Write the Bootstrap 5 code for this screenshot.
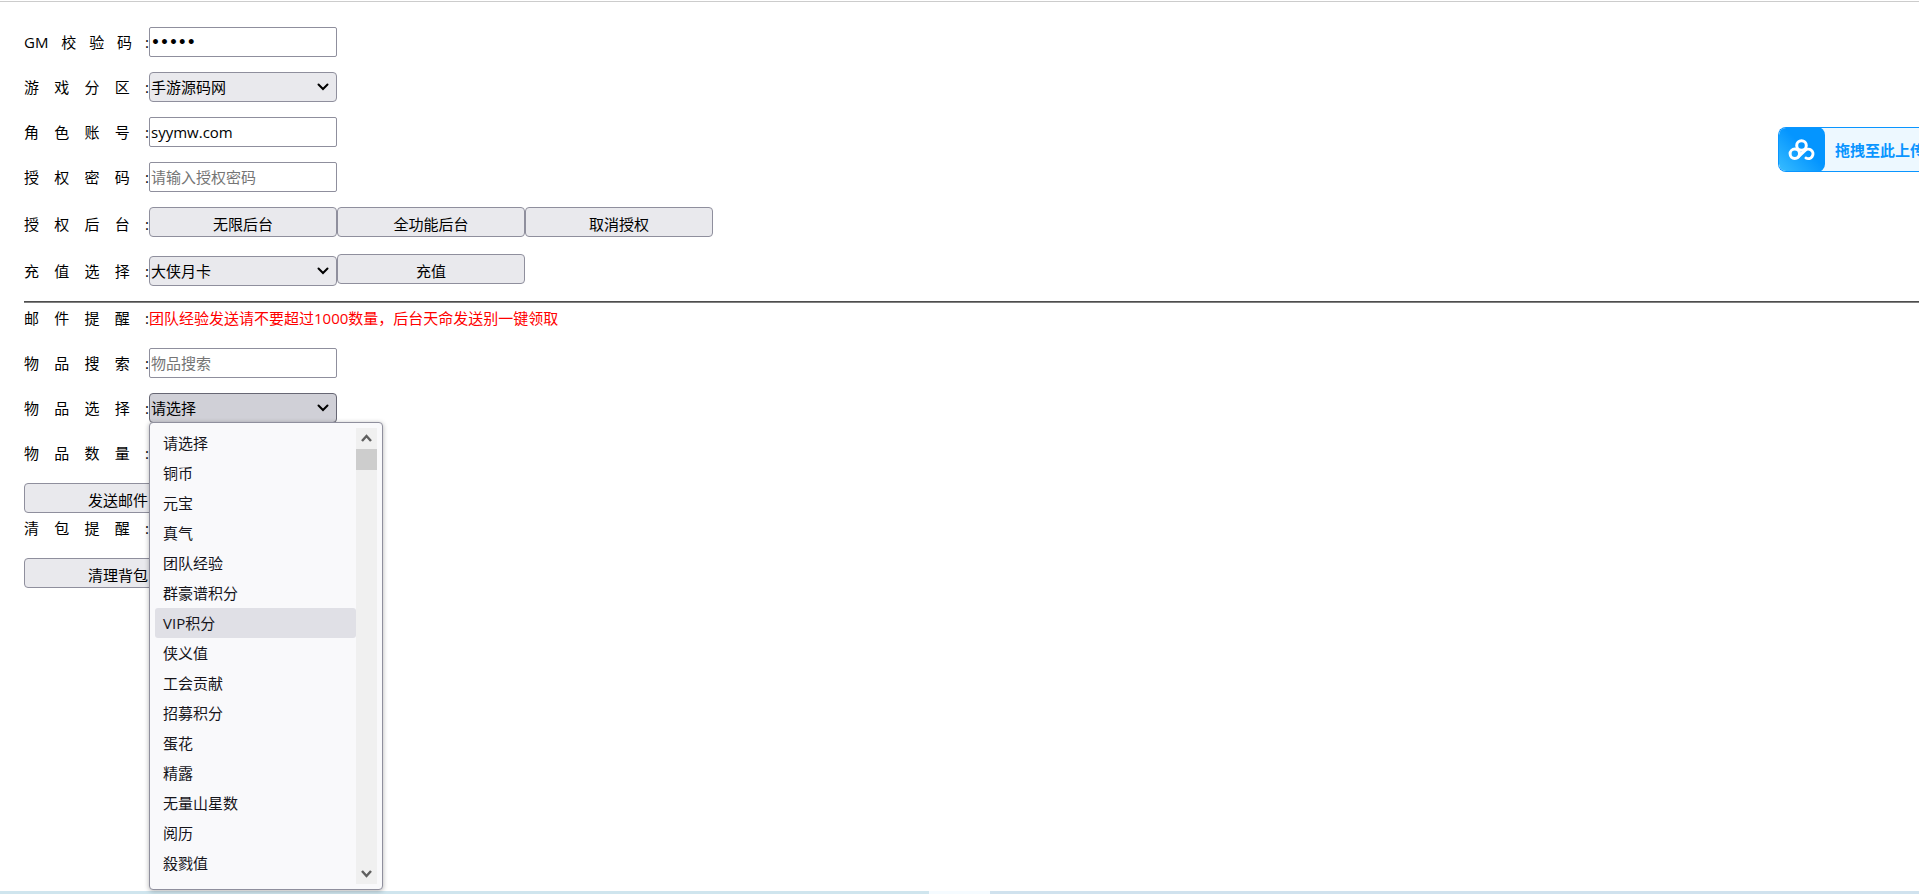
<!DOCTYPE html>
<html lang="zh-CN">
<head>
<meta charset="utf-8">
<meta name="viewport" content="width=device-width, initial-scale=1">
<title>GM 后台</title>
<link href="https://cdn.jsdelivr.net/npm/bootstrap@5.3.0/dist/css/bootstrap.min.css" rel="stylesheet">
<style>
  body { font: 15px/30px "Open Sans", "Noto Sans CJK SC", sans-serif; color: #000; background: #fff; }
  .topline { height: 1px; margin-top: 1px; background: #ccc; }
  .gm-form { padding: 25px 0 0 24px; }
  .gm-row { display: flex; align-items: flex-end; min-height: 30px; margin-bottom: 15px; }
  .gm-row.actions { min-height: 32px; }
  .gm-row.actions .gm-btn { align-self: flex-start; }
  .gm-label { width: 125px; height: 30px; flex: none; text-align: justify; text-align-last: justify; }
  .gm-field, .gm-btn { width: 188px; height: 30px; border: 1px solid #8f8f9d; color: #000; line-height: 28px; flex: none; }
  .gm-field { padding: 0 1px; border-radius: 2px; background: #fff; }
  .gm-field::placeholder { color: #757575; opacity: 1; }
  .gm-field[type="password"] { font-family: "DejaVu Sans", sans-serif; font-weight: 700; font-size: 14px; }
  .gm-btn { border-radius: 4px; background: #e9e9ed; padding: 4px 0 0; line-height: 24px; }
  .gm-select { appearance: none; border-radius: 4px; background: #e9e9ed url("data:image/svg+xml,%3Csvg xmlns='http://www.w3.org/2000/svg' width='12' height='8'%3E%3Cpath d='M1.5 1.5 6 6l4.500-4.500' fill='none' stroke='%23000' stroke-width='2' stroke-linecap='round'/%3E%3C/svg%3E") no-repeat right 7px center; }
  .gm-select.opened { background-color: #d0d0d7; border-color: #676774; }
  .rule { height: 2px; margin: 0; border: 0; border-top: 1px solid #4d4d4d; border-bottom: 1px solid #808080; opacity: 1; }
  .notice { color: #f00; }
  .picker { position: relative; }
  .picker-menu { position: absolute; top: 29px; left: 0; z-index: 5; width: 234px; padding: 5px; display: flex; border: 1px solid #8f8f9d; border-radius: 4px; background: #f9f9fb; color: #15141a; box-shadow: 0 1px 5px rgba(0,0,0,.3); }
  .picker-menu li { padding-left: 8px; height: 30px; border-radius: 3px; }
  .picker-menu li.hover { background: #e0e0e6; }
  .picker-menu ul { margin-bottom: 6px; }
  .track { width: 21px; background: #f0f0f0; }
  .track svg { display: block; }
  .thumb { height: 21px; background: #cdcdcd; }
  .uploader { position: absolute; top: 127px; right: 0; width: 141px; height: 45px; border: 1px solid #0a95ff; border-right: 0; border-radius: 8px 0 0 8px; background: #edf8ff; color: #0a95ff; font-weight: 700; overflow: hidden; white-space: nowrap; text-decoration: none; }
  .uploader-icon { flex: none; width: 46px; height: 45px; margin-right: 10px; border-radius: 8px; background: linear-gradient(45deg, #38bdff, #0495ff 55%); }
  .strip { height: 3px; background: #cfe5ee; }
  .strip-gap { width: 61px; background: #f5fbff; }
  .strip-end { background: #d0e2ee; }
</style>
</head>
<body class="d-flex flex-column min-vh-100 overflow-hidden">
<div class="topline"></div>
<form class="gm-form flex-grow-1">
  <div class="gm-row"><label class="gm-label d-flex justify-content-between" for="code"><span>GM</span> <span>校</span> <span>验</span> <span>码</span> <span>:</span></label><input class="gm-field" type="password" id="code" value="12345"></div>
  <div class="gm-row"><label class="gm-label" for="zone">游 戏 分 区 :</label><select class="gm-field gm-select" id="zone"><option>手游源码网</option></select></div>
  <div class="gm-row"><label class="gm-label" for="account">角 色 账 号 :</label><input class="gm-field" type="text" id="account" value="syymw.com"></div>
  <div class="gm-row"><label class="gm-label" for="pwd">授 权 密 码 :</label><input class="gm-field" type="text" id="pwd" placeholder="请输入授权密码"></div>
  <div class="gm-row actions"><span class="gm-label">授 权 后 台 :</span><button type="button" class="gm-btn">无限后台</button><button type="button" class="gm-btn">全功能后台</button><button type="button" class="gm-btn">取消授权</button></div>
  <div class="gm-row actions"><label class="gm-label" for="charge">充 值 选 择 :</label><select class="gm-field gm-select" id="charge"><option>大侠月卡</option></select><button type="button" class="gm-btn">充值</button></div>
  <hr class="rule">
  <div class="gm-row"><span class="gm-label">邮 件 提 醒 :</span><span class="notice">团队经验发送请不要超过1000数量，后台天命发送别一键领取</span></div>
  <div class="gm-row"><label class="gm-label" for="search">物 品 搜 索 :</label><input class="gm-field" type="text" id="search" placeholder="物品搜索"></div>
  <div class="gm-row"><label class="gm-label" for="item">物 品 选 择 :</label>
    <div class="picker d-flex"><select class="gm-field gm-select opened" id="item"><option>请选择</option></select>
      <div class="picker-menu">
        <ul class="list-unstyled flex-grow-1">
          <li>请选择</li><li>铜币</li><li>元宝</li><li>真气</li><li>团队经验</li><li>群豪谱积分</li><li class="hover">VIP积分</li><li>侠义值</li><li>工会贡献</li><li>招募积分</li><li>蛋花</li><li>精露</li><li>无量山星数</li><li>阅历</li><li>殺戮值</li>
        </ul>
        <div class="track d-flex flex-column">
          <svg width="21" height="21"><path d="M6 13l4.500-5 4.500 5" fill="none" stroke="#606060" stroke-width="2.500"/></svg>
          <div class="thumb"></div>
          <svg class="mt-auto" width="21" height="21"><path d="M6 8l4.500 5L15 8" fill="none" stroke="#606060" stroke-width="2.500"/></svg>
        </div>
      </div>
    </div>
  </div>
  <div class="gm-row"><label class="gm-label" for="count">物 品 数 量 :</label><input class="gm-field" type="text" id="count"></div>
  <div class="d-flex"><button type="button" class="gm-btn">发送邮件</button></div>
  <div class="gm-row"><span class="gm-label">清 包 提 醒 :</span></div>
  <div class="gm-row"><button type="button" class="gm-btn">清理背包</button></div>
</form>
<a class="uploader d-flex align-items-center" href="#">
  <span class="uploader-icon d-flex align-items-center justify-content-center"><svg width="28" height="22" viewBox="0 0 28 22" fill="none" stroke="#fff" stroke-width="3"><circle cx="13.500" cy="6.500" r="4.800"/><circle cx="6.800" cy="14.800" r="4.700"/><path d="M10.200 18 16.800 11.700A4.700 4.700 0 1 1 18 19" stroke-linecap="round"/></svg></span>
  <span>拖拽至此上传</span>
</a>
<footer class="strip d-flex"><div class="strip-left flex-grow-1 w-50"></div><div class="strip-gap flex-shrink-0"></div><div class="strip-end flex-grow-1 w-50"></div></footer>
<script src="https://cdn.jsdelivr.net/npm/bootstrap@5.3.0/dist/js/bootstrap.bundle.min.js"></script>
</body>
</html>
